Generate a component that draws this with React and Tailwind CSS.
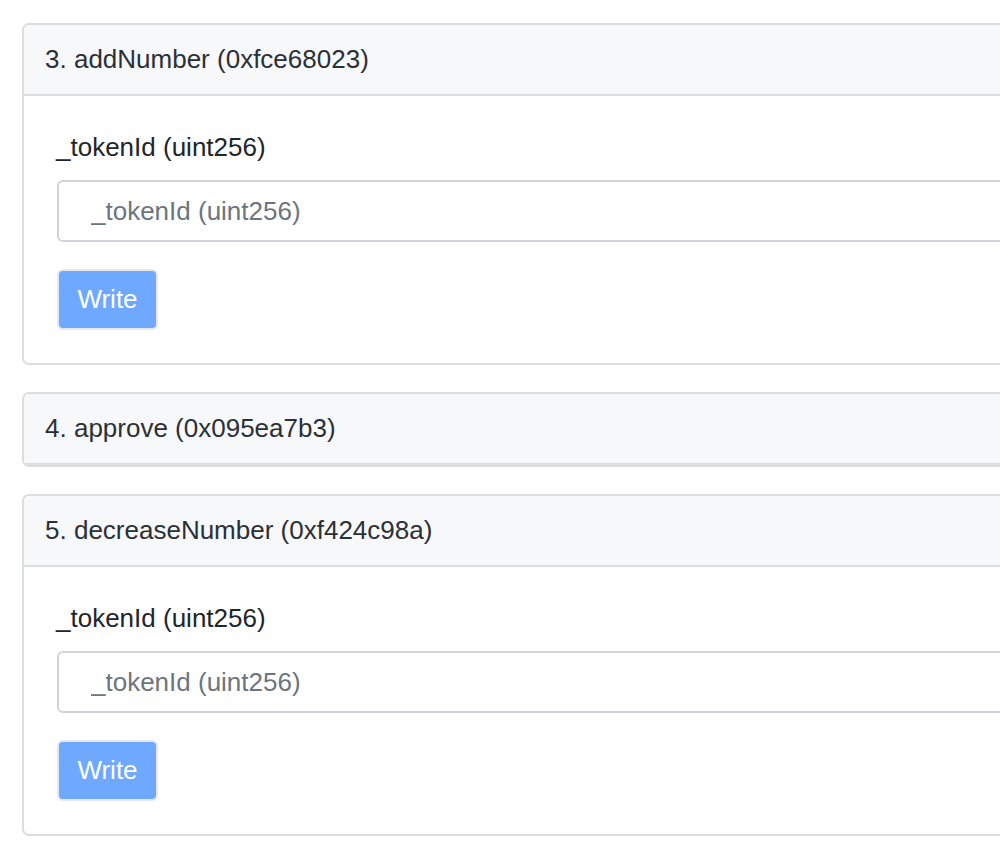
import React from 'react';

const methods = [
    { id: 3, name: 'addNumber', selector: '0xfce68023', inputs: [{ name: '_tokenId', type: 'uint256' }] },
    { id: 4, name: 'approve', selector: '0x095ea7b3', collapsed: true },
    { id: 5, name: 'decreaseNumber', selector: '0xf424c98a', inputs: [{ name: '_tokenId', type: 'uint256' }] },
];

const MethodCard = ({ method }) => {
    return (
        <div className="w-[1100px] bg-white border-2 border-[#dcdddf] rounded-[7px] overflow-hidden">
            {/* Header */}
            <div className="h-[71px] flex items-center pl-[21px] bg-[#f7f8fa] border-b-2 border-[#dcdddf] text-[#2b3036] text-[26px]">
                {method.id}. {method.name} ({method.selector})
            </div>

            {!method.collapsed && (
                <div className="pt-[32px] pb-[33px] pl-[32px]">
                    {method.inputs.map((input) => (
                        <div key={input.name} className="flex flex-col">
                            <label className="text-[26px] leading-[39px] text-[#212529] mb-[13px]">
                                {input.name} ({input.type})
                            </label>
                            <input
                                className="w-[1060px] h-[62px] border-2 border-[#d0d4da] rounded-[6px] pl-[32px] text-[26px] text-[#495057] placeholder:text-[#6c757d] outline-none ml-[1px]"
                                placeholder={`${input.name} (${input.type})`}
                            />
                        </div>
                    ))}
                    <button className="mt-[27px] ml-[1px] w-[101px] h-[61px] rounded-[6px] border-2 border-[#e6e7eb] bg-[#6fa8ff] text-white text-[26px] flex items-center justify-center">
                        Write
                    </button>
                </div>
            )}
        </div>
    );
};

export default function App() {
    return (
        <div
            className="w-[1000px] h-[848px] overflow-hidden bg-white pt-[23px] pl-[22px] flex flex-col gap-[27px]"
            style={{ fontFamily: '"Liberation Sans", Arial, sans-serif' }}
        >
            {methods.map((m) => (
                <MethodCard key={m.id} method={m} />
            ))}
        </div>
    );
}
